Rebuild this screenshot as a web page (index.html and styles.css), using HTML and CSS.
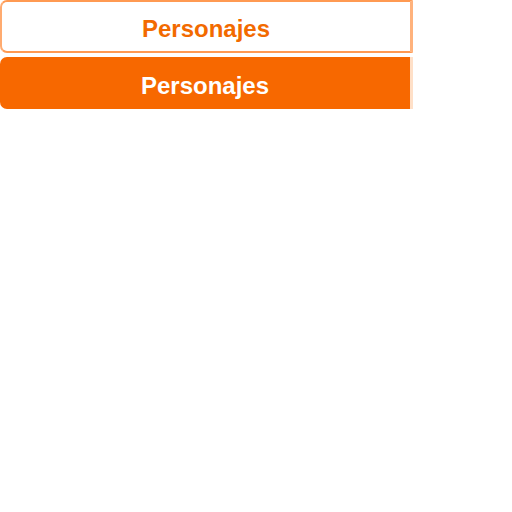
FILE: index.html
```html
<!DOCTYPE html>
<html lang="es">
<head>
  <meta charset="UTF-8" />
  <title>Personajes</title>
  <link rel="stylesheet" href="styles.css">
</head>
<body>
  <div class="tabs">
    <div class="tab">Personajes</div>
    <div class="tab active">Personajes</div>
  </div>
</body>
</html>
```

FILE: styles.css
```css
body {
  margin: 0;
  font-family: "Liberation Sans", Arial, sans-serif;
  background: #fff;
}
.tabs {
  width: 413px;
  display: flex;
  flex-direction: column;
  gap: 4px;
}
.tab {
  height: 53px;
  box-sizing: border-box;
  padding-top: 4px;
  display: flex;
  align-items: center;
  justify-content: center;
  font-size: 24px;
  font-weight: bold;
  color: #f26a00;
  background: #fff;
  border: 2px solid #ff9a52;
  border-left-color: #ffab70;
  border-right: 3px solid #ffb27c;
  border-radius: 7px 0 0 7px;
}
.tab.active {
  height: 52px;
  padding-top: 6px;
  color: #fff;
  background: #f76800;
  border: none;
  border-right: 3px solid #ffe0c8;
}
```
